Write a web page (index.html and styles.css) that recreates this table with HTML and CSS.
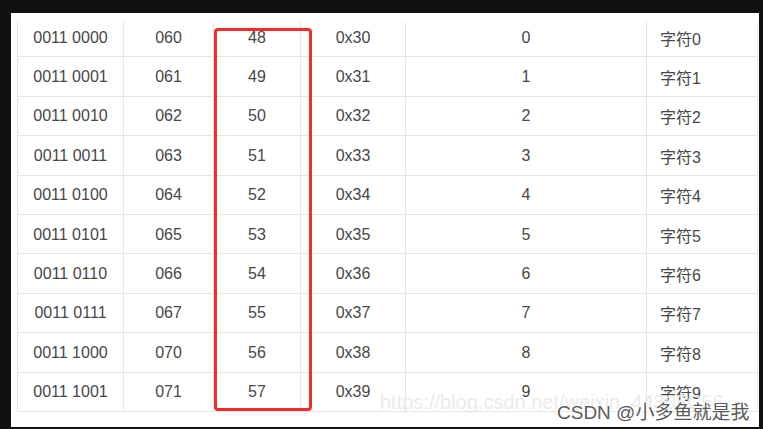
FILE: index.html
```html
<!DOCTYPE html>
<html>
<head>
<meta charset="utf-8">
<link rel="stylesheet" href="styles.css">
</head>
<body>
<div class="panel">
  <div class="grid">
    <div class="c">0011 0000</div><div class="c">060</div><div class="c">48</div><div class="c">0x30</div><div class="c">0</div><div class="c l">字符0</div>
    <div class="c">0011 0001</div><div class="c">061</div><div class="c">49</div><div class="c">0x31</div><div class="c">1</div><div class="c l">字符1</div>
    <div class="c">0011 0010</div><div class="c">062</div><div class="c">50</div><div class="c">0x32</div><div class="c">2</div><div class="c l">字符2</div>
    <div class="c">0011 0011</div><div class="c">063</div><div class="c">51</div><div class="c">0x33</div><div class="c">3</div><div class="c l">字符3</div>
    <div class="c">0011 0100</div><div class="c">064</div><div class="c">52</div><div class="c">0x34</div><div class="c">4</div><div class="c l">字符4</div>
    <div class="c">0011 0101</div><div class="c">065</div><div class="c">53</div><div class="c">0x35</div><div class="c">5</div><div class="c l">字符5</div>
    <div class="c">0011 0110</div><div class="c">066</div><div class="c">54</div><div class="c">0x36</div><div class="c">6</div><div class="c l">字符6</div>
    <div class="c">0011 0111</div><div class="c">067</div><div class="c">55</div><div class="c">0x37</div><div class="c">7</div><div class="c l">字符7</div>
    <div class="c">0011 1000</div><div class="c">070</div><div class="c">56</div><div class="c">0x38</div><div class="c">8</div><div class="c l">字符8</div>
    <div class="c">0011 1001</div><div class="c">071</div><div class="c">57</div><div class="c">0x39</div><div class="c">9</div><div class="c l">字符9</div>
  </div>
  <div class="mask"></div>
  <div class="redbox"></div>
  <div class="wm-url">https://blog.csdn.net/weixin_44305C56</div>
  <div class="wm-name">CSDN @小多鱼就是我</div>
</div>
</body>
</html>
```

FILE: styles.css
```css
html, body {
  margin: 0;
  padding: 0;
  background: #111111;
  width: 763px;
  height: 429px;
  overflow: hidden;
}
.panel {
  position: relative;
  margin: 13px 0 0 11px;
  width: 748px;
  height: 414px;
  background: #ffffff;
  padding: 5px 0 0 6px;
  box-sizing: border-box;
}
.grid {
  display: grid;
  grid-template-columns: 106px 90px 87px 105px 241px 111px;
  grid-template-rows: repeat(10, 39.4px);
  border-left: 1px solid #e6e6e6;
  width: max-content;
}
.c {
  border-right: 1px solid #e6e6e6;
  border-bottom: 1px solid #e6e6e6;
  display: flex;
  align-items: center;
  justify-content: center;
  font-family: "Liberation Sans", "Noto Sans CJK SC", sans-serif;
  font-size: 16px;
  color: #474747;
  padding-top: 1px;
  box-sizing: border-box;
}
.c.l {
  justify-content: flex-start;
  padding-left: 13px;
}
.mask {
  position: absolute;
  left: 0;
  top: 0;
  width: 100%;
  height: 9px;
  background: #ffffff;
}
.redbox {
  position: absolute;
  left: 203px;
  top: 15px;
  width: 98px;
  height: 383px;
  border: 3px solid #f22b2b;
  border-radius: 4px;
  box-sizing: border-box;
}
.wm-url {
  position: absolute;
  left: 369px;
  top: 378px;
  font-family: "Liberation Sans", sans-serif;
  font-size: 20px;
  color: #ebebeb;
  white-space: nowrap;
}
.wm-name {
  position: absolute;
  left: 546px;
  top: 384px;
  font-family: "Liberation Sans", "Noto Sans CJK SC", sans-serif;
  font-size: 19px;
  color: #5a5a5a;
  white-space: nowrap;
  text-shadow: 1px 0 #fff, -1px 0 #fff, 0 1px #fff, 0 -1px #fff;
}
```
